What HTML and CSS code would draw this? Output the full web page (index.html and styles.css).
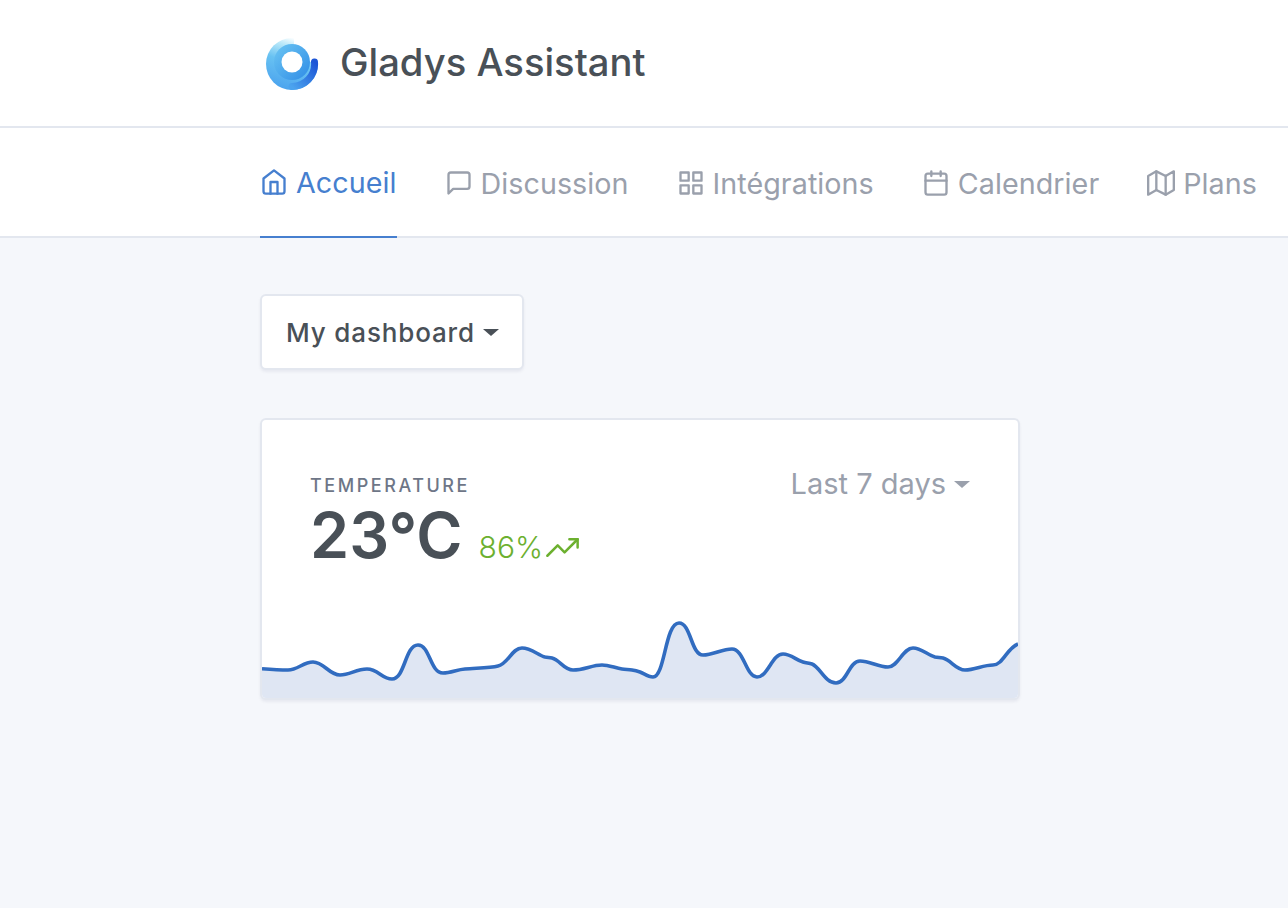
FILE: index.html

```html
<!DOCTYPE html>
<html lang="fr">
<head>
  <meta charset="UTF-8" />
  <meta name="viewport" content="width=device-width, initial-scale=1.0"/>
  <title>Gladys Assistant</title>
  <link rel="stylesheet" href="styles.css">
</head>
<body>
  <header class="header">
    <div class="wrap brand">
      <svg class="logo" viewBox="0 0 56 52" width="56" height="52">
        <defs>
          <linearGradient id="ringGrad" x1="0.7" y1="0" x2="0.35" y2="1">
            <stop offset="0.05" stop-color="#ffffff"/>
            <stop offset="0.22" stop-color="#b9e8f9"/>
            <stop offset="0.5" stop-color="#68c2f2"/>
            <stop offset="1" stop-color="#4ba3ee"/>
          </linearGradient>
          <linearGradient id="innerGrad" x1="0" y1="0" x2="1" y2="1">
            <stop offset="0" stop-color="#6cc6f3"/>
            <stop offset="1" stop-color="#2f8ce6"/>
          </linearGradient>
          <linearGradient id="tailGrad" x1="0" y1="1" x2="1" y2="0">
            <stop offset="0" stop-color="#4ba3ee"/>
            <stop offset="1" stop-color="#1c55d6"/>
          </linearGradient>
        </defs>
        <circle cx="28" cy="26" r="26" fill="url(#ringGrad)"/>
        <path d="M30 -1 L57 -1 L57 22 L47 24 L30 20 Z" fill="#fff"/>
        <circle cx="28" cy="24" r="18" fill="url(#innerGrad)"/>
        <path d="M28 48.5 A22.5 22.5 0 0 0 50.5 24" fill="none" stroke="url(#tailGrad)" stroke-width="7" stroke-linecap="round"/>
        <circle cx="28" cy="24" r="10.5" fill="#fff"/>
      </svg>
      <span class="brand-name">Gladys Assistant</span>
    </div>
  </header>

  <nav class="nav">
    <div class="wrap nav-items">
      <a class="nav-link active">
        <svg class="icon" viewBox="0 0 24 24"><path d="M3 9l9-7 9 7v11a2 2 0 0 1-2 2H5a2 2 0 0 1-2-2z"/><path d="M9 22V12h6v10"/></svg>
        Accueil
      </a>
      <a class="nav-link">
        <svg class="icon" viewBox="0 0 24 24"><path d="M21 15a2 2 0 0 1-2 2H7l-4 4V5a2 2 0 0 1 2-2h14a2 2 0 0 1 2 2z"/></svg>
        Discussion
      </a>
      <a class="nav-link">
        <svg class="icon" viewBox="0 0 24 24"><rect x="3" y="3" width="7" height="7"/><rect x="14" y="3" width="7" height="7"/><rect x="14" y="14" width="7" height="7"/><rect x="3" y="14" width="7" height="7"/></svg>
        Intégrations
      </a>
      <a class="nav-link">
        <svg class="icon" viewBox="0 0 24 24"><rect x="3" y="4" width="18" height="18" rx="2"/><path d="M16 2v4M8 2v4M3 10h18"/></svg>
        Calendrier
      </a>
      <a class="nav-link">
        <svg class="icon" viewBox="0 0 24 24"><path d="M1 6v16l7-4 8 4 7-4V2l-7 4-8-4z"/><path d="M8 2v16M16 6v16"/></svg>
        Plans
      </a>
    </div>
  </nav>

  <main class="wrap content">
    <button class="dash-btn">My dashboard<span class="caret"></span></button>

    <section class="card">
      <div class="card-head">
        <div>
          <div class="card-label">TEMPERATURE</div>
          <div class="card-value">
            <span class="value">23°C</span>
            <span class="trend">86%<svg class="trend-icon" viewBox="0 0 24 24"><path d="M23 6l-9.5 9.5-5-5L1 18"/><path d="M17 6h6v6"/></svg></span>
          </div>
        </div>
        <div class="period">Last 7 days<span class="caret"></span></div>
      </div>
      <svg class="chart" viewBox="0 0 756 88" width="756" height="88">
        <path class="chart-area" d="M0 58.7 C10 59.5 18 60 26 60 C36 60 41 52 51 52 C62 52 67 65 78 65 C88 65 94 59 105 59 C116 59 120 69 130 69 C143 69 143 35 156 35 C168 35 168 63 181 63 C189 63 195 59.5 203 59 C215 58 228 58 236 56 C246 54 250 38 260 38 C269 38 276 45 283 47 C286 47.5 288 47.5 290 48 C298 50 302 60 311 60 C322 60 330 55 340 55 C347 55 353 58 360 59 C364 59.5 367 59.5 370 60 C373 60.5 375 61 378 62 C382 63.5 386 67 391 67 C403 67 403 13 417 13 C429 13 429 45 441 45 C451 45 460 39 470 39 C482 39 484 67 495 67 C506 67 510 44 521 44 C529 44 534 50 541 52 C544 53 547 53 550 54 C558 57 563 73 574 73 C585 73 587 51 598 51 C608 51 616 57 626 57 C636 57 641 38 651 38 C659 38 666 45 673 47 C676 47.5 678 47.5 681 48 C689 50 694 60 703 60 C713 60 721 55 731 55 C741 55 745 38 756 34 L756 88 L0 88 Z"/>
        <path class="chart-line" d="M0 58.7 C10 59.5 18 60 26 60 C36 60 41 52 51 52 C62 52 67 65 78 65 C88 65 94 59 105 59 C116 59 120 69 130 69 C143 69 143 35 156 35 C168 35 168 63 181 63 C189 63 195 59.5 203 59 C215 58 228 58 236 56 C246 54 250 38 260 38 C269 38 276 45 283 47 C286 47.5 288 47.5 290 48 C298 50 302 60 311 60 C322 60 330 55 340 55 C347 55 353 58 360 59 C364 59.5 367 59.5 370 60 C373 60.5 375 61 378 62 C382 63.5 386 67 391 67 C403 67 403 13 417 13 C429 13 429 45 441 45 C451 45 460 39 470 39 C482 39 484 67 495 67 C506 67 510 44 521 44 C529 44 534 50 541 52 C544 53 547 53 550 54 C558 57 563 73 574 73 C585 73 587 51 598 51 C608 51 616 57 626 57 C636 57 641 38 651 38 C659 38 666 45 673 47 C676 47.5 678 47.5 681 48 C689 50 694 60 703 60 C713 60 721 55 731 55 C741 55 745 38 756 34"/>
      </svg>
    </section>
  </main>
</body>
</html>
```

FILE: styles.css

```css
* {
  box-sizing: border-box;
}
body, html {
  margin: 0;
  padding: 0;
  height: 100%;
  overflow: hidden;
  font-family: Inter, "Liberation Sans", sans-serif;
  background: #f5f7fb;
  color: #495057;
}
.wrap {
  padding-left: 260px;
}
.header {
  height: 128px;
  background: #fff;
  border-bottom: 2px solid #e3e7ef;
}
.brand {
  display: flex;
  align-items: center;
  height: 124px;
  padding-left: 264px;
}
.logo {
  flex: none;
  margin-right: 20px;
  margin-top: 4px;
}
.brand-name {
  font-size: 38.2px;
  font-weight: 500;
  color: #495057;
}
.nav {
  height: 110px;
  background: #fff;
  border-bottom: 2px solid #e3e7ef;
}
.nav-items {
  display: flex;
  gap: 48px;
  height: 110px;
}
.nav-link {
  display: flex;
  align-items: center;
  gap: 8px;
  height: 110px;
  font-size: 28.7px;
  letter-spacing: 0.05px;
  color: #9aa0ac;
  white-space: nowrap;
}
.nav-link.active {
  color: #467fcf;
  border-bottom: 2px solid #467fcf;
}
.icon {
  flex: none;
  width: 28px;
  height: 28px;
  fill: none;
  stroke: currentColor;
  stroke-width: 2;
  stroke-linecap: round;
  stroke-linejoin: round;
}
.content {
  padding-top: 56px;
}
.dash-btn {
  display: flex;
  align-items: center;
  width: 264px;
  height: 76px;
  padding: 0 0 0 24px;
  background: #fff;
  border: 2px solid #e3e7ef;
  border-radius: 6px;
  box-shadow: 0 2px 3px rgba(0, 20, 60, 0.06);
  font-family: inherit;
  font-size: 26px;
  font-weight: 500;
  letter-spacing: 0.85px;
  color: #495057;
}
.caret {
  display: inline-block;
  margin-left: 8px;
  border-top: 7px solid currentColor;
  border-left: 8px solid transparent;
  border-right: 8px solid transparent;
}
.card {
  display: flex;
  flex-direction: column;
  justify-content: space-between;
  width: 760px;
  height: 282px;
  margin-top: 48px;
  background: #fff;
  border: 2px solid #e3e7ef;
  border-radius: 6px;
  box-shadow: 0 2px 3px rgba(0, 20, 60, 0.06);
  overflow: hidden;
}
.card-head {
  display: flex;
  justify-content: space-between;
  align-items: flex-start;
  padding: 55px 48px 0;
}
.card-label {
  font-size: 18px;
  font-weight: 500;
  letter-spacing: 2.55px;
  line-height: 22px;
  color: #6e7687;
}
.card-value {
  display: flex;
  align-items: baseline;
  margin-top: 7px;
  line-height: 62px;
}
.value {
  font-size: 62.8px;
  font-weight: 600;
  color: #495057;
}
.trend {
  display: flex;
  align-items: baseline;
  margin-left: 16px;
  font-size: 30px;
  font-weight: 300;
  color: #6cb02f;
}
.trend-icon {
  width: 33px;
  height: 33px;
  align-self: center;
  margin-left: 3px;
  fill: none;
  stroke: currentColor;
  stroke-width: 1.8;
  stroke-linecap: round;
  stroke-linejoin: round;
}
.period {
  display: flex;
  align-items: center;
  margin-top: -4px;
  font-size: 29px;
  line-height: 26px;
  color: #9aa0ac;
}
.chart {
  display: block;
  flex: none;
}
.chart-area {
  fill: #dfe6f3;
}
.chart-line {
  fill: none;
  stroke: #316cc0;
  stroke-width: 3.6;
}
```
